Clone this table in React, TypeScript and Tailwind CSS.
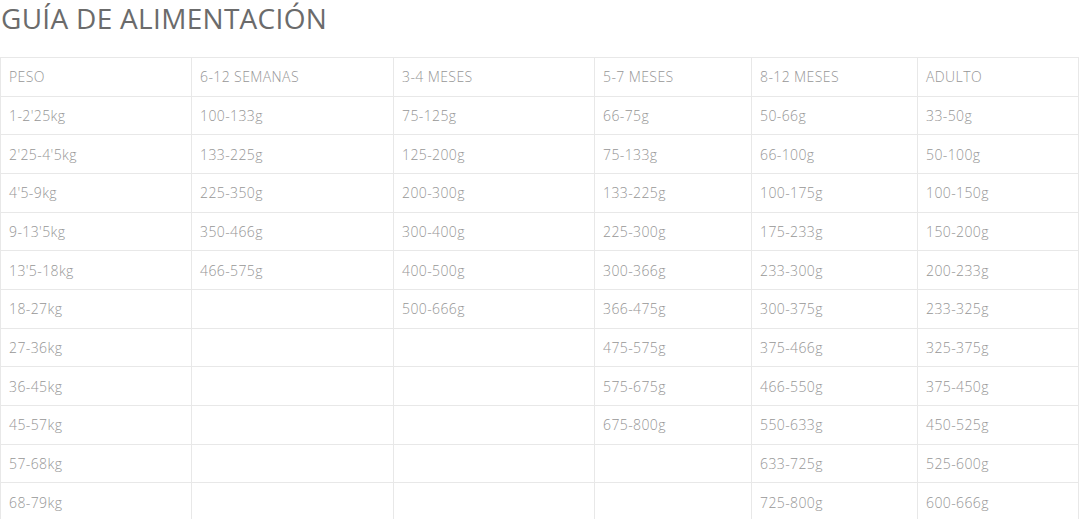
import React from 'react';

const headers = ['PESO', '6-12 SEMANAS', '3-4 MESES', '5-7 MESES', '8-12 MESES', 'ADULTO'];

const rows: string[][] = [
  ['1-2\'25kg', '100-133g', '75-125g', '66-75g', '50-66g', '33-50g'],
  ['2\'25-4\'5kg', '133-225g', '125-200g', '75-133g', '66-100g', '50-100g'],
  ['4\'5-9kg', '225-350g', '200-300g', '133-225g', '100-175g', '100-150g'],
  ['9-13\'5kg', '350-466g', '300-400g', '225-300g', '175-233g', '150-200g'],
  ['13\'5-18kg', '466-575g', '400-500g', '300-366g', '233-300g', '200-233g'],
  ['18-27kg', '', '500-666g', '366-475g', '300-375g', '233-325g'],
  ['27-36kg', '', '', '475-575g', '375-466g', '325-375g'],
  ['36-45kg', '', '', '575-675g', '466-550g', '375-450g'],
  ['45-57kg', '', '', '675-800g', '550-633g', '450-525g'],
  ['57-68kg', '', '', '', '633-725g', '525-600g'],
  ['68-79kg', '', '', '', '725-800g', '600-666g'],
];

const colWidths = ['w-[191px]', 'w-[202px]', 'w-[201px]', 'w-[157px]', 'w-[166px]', 'w-[161px]'];

export default function App() {
  return (
    <div className="w-[1080px] h-[519px] overflow-hidden bg-white font-['Open_Sans',sans-serif]">
      {/* Title */}
      <h1 className="pl-px text-[28px] leading-[36px] font-normal text-[#6b6b6b] tracking-[0.3px]">
        GUÍA DE ALIMENTACIÓN
      </h1>

      {/* Feeding table */}
      <table className="mt-[21px] w-[1078px] table-fixed border-collapse text-[14px] tracking-[0.4px] text-[#969696] font-light">
        <colgroup>
          {colWidths.map((w, i) => (
            <col key={i} className={w} />
          ))}
        </colgroup>
        <thead>
          <tr className="h-[38.67px]">
            {headers.map((h) => (
              <th key={h} className="border border-[#e8e8e8] px-2 text-left font-light">
                {h}
              </th>
            ))}
          </tr>
        </thead>
        <tbody>
          {rows.map((r, i) => (
            <tr key={i} className="h-[38.67px]">
              {r.map((c, j) => (
                <td key={j} className="border border-[#e8e8e8] px-2">
                  {c}
                </td>
              ))}
            </tr>
          ))}
        </tbody>
      </table>
    </div>
  );
}
